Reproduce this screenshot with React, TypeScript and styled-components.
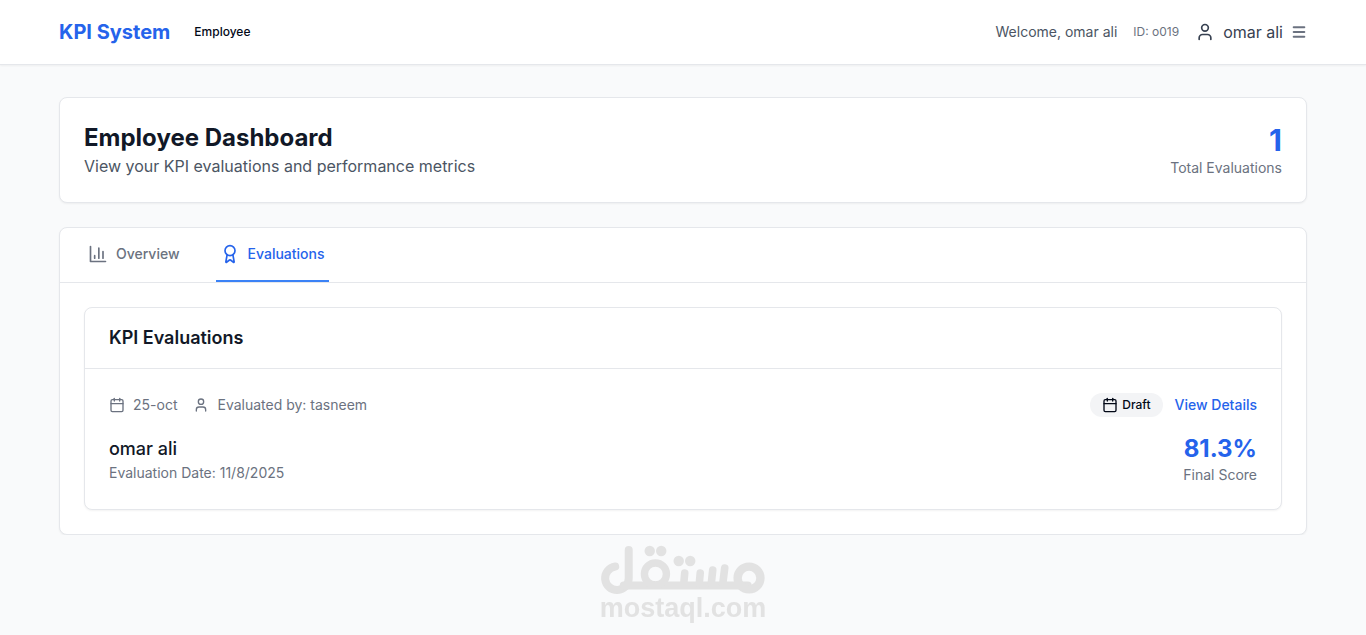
import React from 'react';
import styled, { createGlobalStyle } from 'styled-components';
import { Award, Calendar, Menu, User } from 'lucide-react';

const GlobalStyle = createGlobalStyle`
  *, *::before, *::after { box-sizing: border-box; }
  body {
    margin: 0;
    background: #f9fafb;
    color: #111827;
    font-family: Inter, "Liberation Sans", sans-serif;
    font-size: 16px;
    line-height: 24px;
  }
  h1, h2, h3, p { margin: 0; }
  button { font: inherit; border: 0; background: none; padding: 0; cursor: pointer; }
  svg { flex: none; display: block; }
`;

const TopBar = styled.header`
  background: #fff;
  border-bottom: 1px solid #e5e7eb;
  box-shadow: 0 1px 2px rgba(0, 0, 0, 0.05);
`;

const Container = styled.div`
  max-width: 1312px;
  margin: 0 auto;
  padding: 0 32px;
`;

const TopBarRow = styled(Container)`
  display: flex;
  align-items: center;
  justify-content: space-between;
  height: 64px;
`;

const BrandGroup = styled.div`
  display: flex;
  align-items: center;
  gap: 24px;
`;

const Brand = styled.a`
  color: #2563eb;
  font-size: 20px;
  line-height: 28px;
  font-weight: 700;
  text-decoration: none;
`;

const Role = styled.span`
  font-size: 12px;
  line-height: 16px;
  font-weight: 500;
  color: #020817;
`;

const Account = styled.div`
  display: flex;
  align-items: center;
  gap: 16px;
`;

const Welcome = styled.span`
  font-size: 14px;
  line-height: 20px;
  color: #4b5563;
`;

const AccountId = styled.span`
  font-size: 12px;
  line-height: 16px;
  color: #6b7280;
`;

const UserMenu = styled.button`
  display: flex;
  align-items: center;
  gap: 8px;
  color: #374151;
`;

const Page = styled(Container).attrs({ as: 'main' })`
  display: flex;
  flex-direction: column;
  gap: 24px;
  padding-top: 32px;
`;

const Card = styled.section`
  background: #fff;
  border: 1px solid #e5e7eb;
  border-radius: 8px;
  box-shadow: 0 1px 2px rgba(0, 0, 0, 0.05);
`;

const Hero = styled(Card)`
  display: flex;
  align-items: center;
  justify-content: space-between;
  padding: 24px;
`;

const Title = styled.h1`
  font-size: 24px;
  line-height: 32px;
  font-weight: 700;
`;

const Subtitle = styled.p`
  color: #4b5563;
`;

const Stat = styled.div`
  text-align: right;
`;

const StatValue = styled.div<{ $large?: boolean }>`
  font-size: ${(p) => (p.$large ? 30 : 24)}px;
  line-height: ${(p) => (p.$large ? 36 : 32)}px;
  font-weight: 700;
  color: #2563eb;
`;

const Muted = styled.div`
  font-size: 14px;
  line-height: 20px;
  color: #6b7280;
`;

const Tabs = styled.nav`
  display: flex;
  gap: 32px;
  padding: 0 24px;
  border-bottom: 1px solid #e5e7eb;
`;

const Tab = styled.button<{ $active?: boolean }>`
  display: flex;
  align-items: center;
  gap: 8px;
  padding: 16px 4px;
  border-bottom: 2px solid ${(p) => (p.$active ? '#3b82f6' : 'transparent')};
  color: ${(p) => (p.$active ? '#2563eb' : '#6b7280')};
  font-size: 14px;
  line-height: 20px;
  font-weight: 500;
`;

const TabBody = styled.div`
  padding: 24px;
`;

const ListHeader = styled.header`
  padding: 16px 24px;
  border-bottom: 1px solid #e5e7eb;
`;

const ListTitle = styled.h2`
  font-size: 18px;
  line-height: 28px;
  font-weight: 600;
`;

const Evaluation = styled.article`
  display: flex;
  flex-direction: column;
  gap: 16px;
  padding: 24px;
`;

const Row = styled.div`
  display: flex;
  align-items: center;
  justify-content: space-between;
`;

const Group = styled.div<{ $gap: number }>`
  display: flex;
  align-items: center;
  gap: ${(p) => p.$gap}px;
`;

const Meta = styled(Muted)`
  display: flex;
  align-items: center;
  gap: 8px;
`;

const Badge = styled.span`
  display: flex;
  align-items: center;
  gap: 4px;
  padding: 4px 12px;
  border-radius: 12px;
  background: #f3f4f6;
  color: #020817;
  font-size: 12px;
  line-height: 16px;
  font-weight: 500;
`;

const DetailsButton = styled.button`
  color: #2563eb;
  font-size: 14px;
  line-height: 20px;
  font-weight: 500;
`;

const PersonName = styled.h3`
  font-size: 18px;
  line-height: 28px;
  font-weight: 500;
`;

const Watermark = styled.div`
  position: fixed;
  left: 50%;
  bottom: 14px;
  transform: translateX(-50%);
  display: flex;
  flex-direction: column;
  align-items: center;
  color: #e2e2e2;
  pointer-events: none;
`;

const WatermarkText = styled.span`
  font-family: "Liberation Sans", Arial, sans-serif;
  font-size: 27px;
  line-height: 26px;
  font-weight: 700;
`;

const ChartIcon = () => (
  <svg width="20" height="20" viewBox="0 0 24 24" fill="none" stroke="currentColor" strokeWidth="2" strokeLinecap="round" strokeLinejoin="round" aria-hidden="true">
    <path d="M3 3v18h18M18 17V9M13 17V5M8 17v-3" />
  </svg>
);

const MostaqlMark = () => (
  <svg width="166" height="50" viewBox="0 0 166 50" fill="none" stroke="currentColor" strokeLinecap="round" aria-hidden="true">
    <path d="M15.5 21.5A11.8 11.8 0 1 0 29 33V5" strokeWidth="8" />
    <path d="M24 40.5H148" strokeWidth="8" />
    <circle cx="55.7" cy="29" r="11" strokeWidth="7.4" />
    <circle cx="149.3" cy="33" r="11.4" strokeWidth="8.4" />
    <path d="M84 39L85 28M99.5 39L100.5 28M111.5 39L113 25M123 39L125 23" strokeWidth="7.6" />
    <g fill="currentColor" stroke="none">
      <circle cx="50" cy="6" r="5.2" />
      <circle cx="61.5" cy="6" r="5.2" />
      <circle cx="79" cy="16" r="5.2" />
      <circle cx="90.5" cy="16" r="5.2" />
    </g>
  </svg>
);

export default function App() {
  return (
    <>
      <GlobalStyle />
      <TopBar>
        <TopBarRow>
          <BrandGroup>
            <Brand href="#">KPI System</Brand>
            <Role>Employee</Role>
          </BrandGroup>
          <Account>
            <Welcome>Welcome, omar ali</Welcome>
            <AccountId>ID: o019</AccountId>
            <UserMenu type="button">
              <User size={20} />
              <span>omar ali</span>
              <Menu size={16} strokeWidth={3} color="#6b7280" />
            </UserMenu>
          </Account>
        </TopBarRow>
      </TopBar>

      <Page>
        <Hero>
          <div>
            <Title>Employee Dashboard</Title>
            <Subtitle>View your KPI evaluations and performance metrics</Subtitle>
          </div>
          <Stat>
            <StatValue $large>1</StatValue>
            <Muted>Total Evaluations</Muted>
          </Stat>
        </Hero>

        <Card>
          <Tabs>
            <Tab type="button">
              <ChartIcon />
              Overview
            </Tab>
            <Tab type="button" $active>
              <Award size={20} />
              Evaluations
            </Tab>
          </Tabs>
          <TabBody>
            <Card>
              <ListHeader>
                <ListTitle>KPI Evaluations</ListTitle>
              </ListHeader>
              <Evaluation>
                <Row>
                  <Group $gap={16}>
                    <Meta>
                      <Calendar size={16} />
                      25-oct
                    </Meta>
                    <Meta>
                      <User size={16} />
                      Evaluated by: tasneem
                    </Meta>
                  </Group>
                  <Group $gap={12}>
                    <Badge>
                      <Calendar size={16} />
                      Draft
                    </Badge>
                    <DetailsButton type="button">View Details</DetailsButton>
                  </Group>
                </Row>
                <Row>
                  <div>
                    <PersonName>omar ali</PersonName>
                    <Muted>Evaluation Date: 11/8/2025</Muted>
                  </div>
                  <Stat>
                    <StatValue>81.3%</StatValue>
                    <Muted>Final Score</Muted>
                  </Stat>
                </Row>
              </Evaluation>
            </Card>
          </TabBody>
        </Card>
      </Page>

      <Watermark>
        <MostaqlMark />
        <WatermarkText>mostaql.com</WatermarkText>
      </Watermark>
    </>
  );
}
